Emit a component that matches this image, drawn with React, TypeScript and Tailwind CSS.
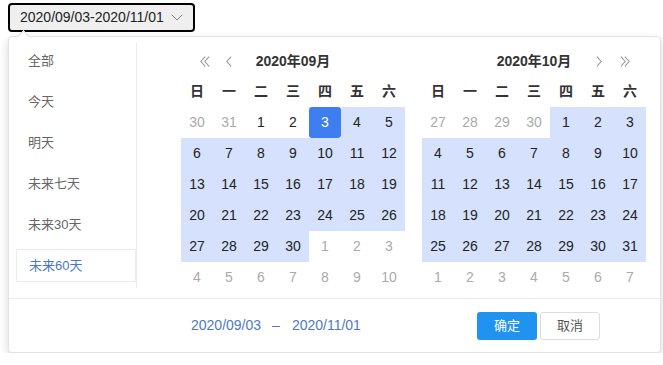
import React from 'react'

type Day = { n: number; cur: boolean; inRange: boolean; start: boolean }

const WEEK = ['日', '一', '二', '三', '四', '五', '六']
const SHORTCUTS = ['全部', '今天', '明天', '未来七天', '未来30天', '未来60天']

// build a 6x7 month grid; range is given as [month, day] pairs of 2020
function buildMonth(month: number, from: [number, number], to: [number, number]): Day[] {
    const first = new Date(2020, month - 1, 1)
    const start = new Date(2020, month - 1, 1 - first.getDay())
    const lo = new Date(2020, from[0] - 1, from[1]).getTime()
    const hi = new Date(2020, to[0] - 1, to[1]).getTime()
    const days: Day[] = []
    for (let i = 0; i < 42; i++) {
        const d = new Date(start.getFullYear(), start.getMonth(), start.getDate() + i)
        const cur = d.getMonth() === month - 1
        const t = d.getTime()
        days.push({ n: d.getDate(), cur, inRange: cur && t >= lo && t <= hi, start: t === lo })
    }
    return days
}

function Chevron({ dir }: { dir: 'left' | 'right' }) {
    return (
        <svg width="6" height="11" viewBox="0 0 6 11" fill="none">
            <path d={dir === 'left' ? 'M5.2 0.6 L0.8 5.5 L5.2 10.4' : 'M0.8 0.6 L5.2 5.5 L0.8 10.4'} stroke="#9a9a9a" strokeWidth="1.1" />
        </svg>
    )
}

function DoubleChevron({ dir }: { dir: 'left' | 'right' }) {
    const a = dir === 'left' ? 'M5.2 0.6 L0.8 5.5 L5.2 10.4' : 'M0.8 0.6 L5.2 5.5 L0.8 10.4'
    const b = dir === 'left' ? 'M9.2 0.6 L4.8 5.5 L9.2 10.4' : 'M4.8 0.6 L9.2 5.5 L4.8 10.4'
    return (
        <svg width="10" height="11" viewBox="0 0 10 11" fill="none">
            <path d={a} stroke="#9a9a9a" strokeWidth="1.1" />
            <path d={b} stroke="#9a9a9a" strokeWidth="1.1" />
        </svg>
    )
}

function Month({ title, month, side }: { title: string; month: number; side: 'left' | 'right' }) {
    const days = buildMonth(month, [9, 3], [11, 1])
    return (
        <div className="w-[224px]">
            <div className="relative h-[30px] flex items-center justify-center">
                {side === 'left' ? (
                    <>
                        <span className="absolute left-[19px] top-[10px] flex"><DoubleChevron dir="left" /></span>
                        <span className="absolute left-[45px] top-[10px] flex"><Chevron dir="left" /></span>
                    </>
                ) : (
                    <>
                        <span className="absolute left-[174px] top-[10px] flex"><Chevron dir="right" /></span>
                        <span className="absolute left-[198px] top-[10px] flex"><DoubleChevron dir="right" /></span>
                    </>
                )}
                <span className="text-[14px] font-bold text-[#333]">{title}</span>
            </div>
            <div className="grid grid-cols-7">
                {WEEK.map((w) => (
                    <div key={w} className="h-[31px] flex items-center justify-center text-[14px] font-bold text-[#333]">{w}</div>
                ))}
                {days.map((d, i) => (
                    <div
                        key={i}
                        className={
                            'h-[31px] flex items-center justify-center text-[14px] ' +
                            (d.start
                                ? 'bg-[#3e7ef1] text-white rounded-[3px]'
                                : d.inRange
                                ? 'bg-[#d6e2fd] text-[#222]'
                                : d.cur
                                ? 'text-[#222]'
                                : 'text-[#aaa]')
                        }
                    >
                        {d.n}
                    </div>
                ))}
            </div>
        </div>
    )
}

export default function App() {
    return (
        <div className="pl-[8px] pt-[3px] font-['Liberation_Sans','Noto_Sans_CJK_SC',sans-serif]">
            <button className="w-[187px] h-[29px] flex items-center pl-[10px] border-2 border-black rounded-[4px] bg-[#efefef] text-[14px] text-[#222]">
                <span>2020/09/03-2020/11/01</span>
                <svg className="ml-[7px]" width="12" height="7" viewBox="0 0 12 7" fill="none">
                    <path d="M0.7 0.7 L6 6 L11.3 0.7" stroke="#888" strokeWidth="1" />
                </svg>
            </button>

            <div className="relative mt-[4px] w-[653px] bg-white border border-[#e2e2e2] rounded-[4px] shadow-[0_4px_10px_rgba(0,0,0,0.16)]">
                <div className="absolute left-[10px] -top-[5px] w-[9px] h-[9px] rotate-45 bg-white border-l border-t border-[#ddd]" />

                <div className="flex h-[261px]">
                    <div className="w-[128px] mt-[5px] h-[246px] border-r border-[#ececec] pl-[7px] pt-[2px] flex flex-col gap-[8px]">
                        {SHORTCUTS.map((s, i) => (
                            <div
                                key={s}
                                className={
                                    'w-[120px] h-[33px] flex items-center pl-[12px] text-[13px] ' +
                                    (i === SHORTCUTS.length - 1
                                        ? 'border border-[#ececec] text-[#4b77c9]'
                                        : 'text-[#666]')
                                }
                            >
                                {s}
                            </div>
                        ))}
                    </div>
                    <div className="flex gap-[17px] pl-[44px] pt-[9px]">
                        <Month title="2020年09月" month={9} side="left" />
                        <Month title="2020年10月" month={10} side="right" />
                    </div>
                </div>

                <div className="border-t border-[#ececec] h-[54px] flex items-center pl-[182px] pr-[60px]">
                    <div className="flex items-center text-[14px] text-[#4f78c6]">
                        <span>2020/09/03</span>
                        <span className="ml-[11px]">–</span>
                        <span className="ml-[12px]">2020/11/01</span>
                    </div>
                    <div className="ml-auto flex gap-[3px]">
                        <button className="w-[60px] h-[28px] rounded-[3px] bg-[#2093f0] text-white text-[13px]">确定</button>
                        <button className="w-[60px] h-[28px] rounded-[3px] bg-white border border-[#ddd] text-[#555] text-[13px]">取消</button>
                    </div>
                </div>
            </div>
        </div>
    )
}
